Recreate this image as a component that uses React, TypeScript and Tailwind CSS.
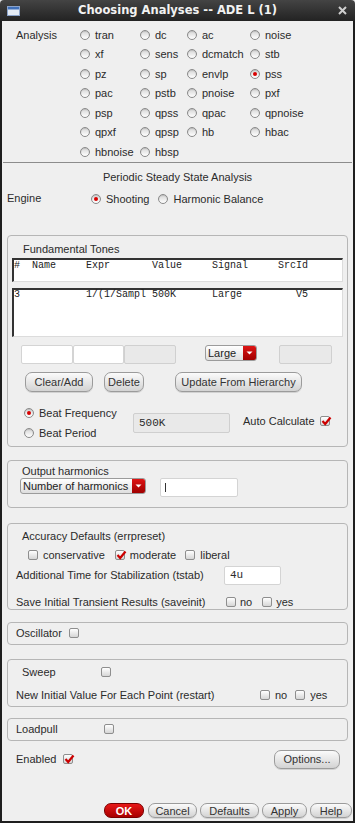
import React from "react";

const Radio = ({ on = false }: { on?: boolean }) => (
  <span className="inline-flex w-[10px] h-[10px] shrink-0 items-center justify-center rounded-full border border-[#8a8a8a] bg-linear-to-b from-[#d6d6d6] to-[#ffffff] shadow-[inset_0_1px_1px_rgba(0,0,0,0.12)]">
    {on && <span className="w-[4px] h-[4px] rounded-full bg-[#d80000]" />}
  </span>
);

const Check = ({ on = false }: { on?: boolean }) => (
  <span className="relative inline-flex w-[10px] h-[10px] shrink-0 items-center justify-center rounded-[2px] border border-[#8e8e8e] bg-linear-to-b from-[#ffffff] to-[#d6d6d6]">
    {on && (
      <svg width="11" height="10" viewBox="0 0 11 10" className="absolute left-[0px] top-[-1px]">
        <path d="M1.5 5 L4.2 8 L9.5 1.5" stroke="#cc0000" strokeWidth="2.2" fill="none" />
      </svg>
    )}
  </span>
);

const Btn = ({ children, className = "" }: { children: React.ReactNode; className?: string }) => (
  <div
    className={
      "flex shrink-0 items-center justify-center rounded-[7px] border border-[#9b9b9b] bg-linear-to-b from-[#fbfbfb] to-[#d3d3d3] text-[#333] shadow-[0_1px_0_rgba(0,0,0,0.12)] " +
      className
    }
  >
    {children}
  </div>
);

const Drop = ({ label, className = "" }: { label: string; className?: string }) => (
  <div
    className={
      "flex shrink-0 h-[16px] overflow-hidden rounded-[3px] border border-[#9b9b9b] bg-linear-to-b from-[#ffffff] to-[#dedede] " +
      className
    }
  >
    <span className="flex-1 pl-[2px] leading-[14px] text-[#222]">{label}</span>
    <span className="flex w-[13px] items-center justify-center bg-linear-to-b from-[#de1414] to-[#a00000]">
      <svg width="7" height="4" viewBox="0 0 7 4">
        <path d="M0.5 0.5 L6.5 0.5 L3.5 3.5 Z" fill="#ffffff" />
      </svg>
    </span>
  </div>
);

const Group = ({ children, className = "" }: { children: React.ReactNode; className?: string }) => (
  <div className={"mx-[5px] shrink-0 rounded-[4px] border border-[#b6b6b6] " + className}>{children}</div>
);

const analyses: [string, boolean][][] = [
  [["tran", false], ["dc", false], ["ac", false], ["noise", false]],
  [["xf", false], ["sens", false], ["dcmatch", false], ["stb", false]],
  [["pz", false], ["sp", false], ["envlp", false], ["pss", true]],
  [["pac", false], ["pstb", false], ["pnoise", false], ["pxf", false]],
  [["psp", false], ["qpss", false], ["qpac", false], ["qpnoise", false]],
  [["qpxf", false], ["qpsp", false], ["hb", false], ["hbac", false]],
  [["hbnoise", false], ["hbsp", false]],
];

export default function App() {
  return (
    <div className="w-[355px] h-[823px] flex flex-col bg-[#e6e6e6] overflow-hidden">
      {/* Title bar */}
      <div className="h-[21px] shrink-0 flex items-center rounded-t-[4px] bg-linear-to-b from-[#444444] to-[#232323]">
        <div className="w-[40px] pl-[7px] flex items-center">
          <svg width="13" height="10" viewBox="0 0 13 10">
            <rect x="0.5" y="0.5" width="12" height="9" fill="#e4ebf5" stroke="#8aa2c8" />
            <rect x="1" y="1" width="11" height="2.5" fill="#3f6fb8" />
          </svg>
        </div>
        <div className="flex-1 text-center text-[11.5px] font-bold text-[#f2f2f2] font-['DejaVu_Sans',sans-serif] whitespace-nowrap">
          Choosing Analyses -- ADE L (1)
        </div>
        <div className="w-[40px] pr-[8px] flex justify-end">
          <svg width="9" height="9" viewBox="0 0 9 9">
            <path d="M1 1 L8 8 M8 1 L1 8" stroke="#cfcfcf" strokeWidth="2" />
          </svg>
        </div>
      </div>

      {/* Body */}
      <div className="flex-1 flex flex-col border-x-2 border-b-2 border-[#1e1e1e] bg-[#efefef] text-[11px] leading-[14px] text-[#2b2b2b] font-['Liberation_Sans',Arial,sans-serif]">
        {/* Analysis */}
        <div className="flex pt-[4px] pl-[14px]">
          <div className="w-[64px] h-[19.5px] flex items-center">Analysis</div>
          <div className="grid grid-cols-[60px_47px_63px_80px] auto-rows-[19.5px]">
            {analyses.flat().map(([name, on]) => (
              <div key={name} className="flex items-center">
                <Radio on={on} />
                <span className="ml-[5px]">{name}</span>
              </div>
            ))}
          </div>
        </div>
        <div className="h-0 border-t border-t-[#8c8c8c] mx-[1px]" />

        <div className="h-[28px] flex items-center justify-center">Periodic Steady State Analysis</div>
        <div className="h-[16px] flex items-center pl-[5px]">
          <span className="w-[84px] -mt-[2px]">Engine</span>
          <Radio on />
          <span className="ml-[5px]">Shooting</span>
          <span className="ml-[9px] flex">
            <Radio />
          </span>
          <span className="ml-[5px]">Harmonic Balance</span>
        </div>

        {/* Fundamental Tones */}
        <Group className="mt-[28px] h-[212px] flex flex-col">
          <div className="pl-[15px] mt-[6px]">Fundamental Tones</div>
          <div className="mx-[4px] mt-[2px] h-[24px] bg-white border-t-2 border-l-2 border-t-[#333] border-l-[#333] border-r border-b border-r-[#dcdcdc] border-b-[#dcdcdc] font-['Liberation_Mono',monospace] text-[10px] leading-[12px] whitespace-pre text-[#222]">
            {"#  Name     Expr       Value     Signal     SrcId"}
          </div>
          <div className="mx-[4px] mt-[6px] h-[49px] bg-white border-t-2 border-l-2 border-t-[#333] border-l-[#333] border-r border-b border-r-[#dcdcdc] border-b-[#dcdcdc] font-['Liberation_Mono',monospace] text-[10px] leading-[10px] whitespace-pre text-[#222]">
            {"3           1/(1/Sampl 500K      Large         V5"}
          </div>
          <div className="mt-[8px] flex items-start pl-[13px]">
            <div className="w-[52px] h-[19px] bg-white border border-[#d4d4d4] rounded-[2px]" />
            <div className="w-[51px] h-[19px] bg-white border border-[#d4d4d4] rounded-[2px]" />
            <div className="w-[52px] h-[19px] bg-[#e9e9e9] border border-[#d0d0d0] rounded-[2px]" />
            <Drop label="Large" className="ml-[29px] w-[52px]" />
            <div className="ml-[22px] w-[53px] h-[19px] bg-[#e9e9e9] border border-[#d0d0d0] rounded-[2px]" />
          </div>
          <div className="mt-[8px] flex pl-[17px]">
            <Btn className="w-[68px] h-[20px]">Clear/Add</Btn>
            <Btn className="ml-[11px] w-[40px] h-[20px]">Delete</Btn>
            <Btn className="ml-[31px] w-[127px] h-[20px]">Update From Hierarchy</Btn>
          </div>
          <div className="mt-[12px] flex items-start pl-[16px]">
            <div className="w-[109px]">
              <div className="h-[19.5px] flex items-center">
                <Radio on />
                <span className="ml-[5px]">Beat Frequency</span>
              </div>
              <div className="h-[19.5px] flex items-center">
                <Radio />
                <span className="ml-[5px]">Beat Period</span>
              </div>
            </div>
            <div className="mt-[9px] w-[97px] h-[20px] flex items-center pl-[5px] bg-[#e9e9e9] border border-[#cfcfcf] rounded-[2px] font-['Liberation_Mono',monospace] text-[11px]">
              500K
            </div>
            <div className="ml-[13px] mt-[10px] h-[14px] flex items-center">
              <span>Auto Calculate</span>
              <span className="ml-[5px] flex">
                <Check on />
              </span>
            </div>
          </div>
        </Group>

        {/* Output harmonics */}
        <Group className="mt-[13px] h-[48px]">
          <div className="pl-[14px] mt-[3px]">Output harmonics</div>
          <div className="flex items-start pl-[12px]">
            <Drop label="Number of harmonics" className="w-[126px]" />
            <div className="ml-[14px] w-[78px] h-[19px] flex items-center pl-[4px] bg-white border border-[#d4d4d4] rounded-[2px]">
              <span className="w-[1px] h-[9px] bg-[#333]" />
            </div>
          </div>
        </Group>

        {/* Accuracy */}
        <Group className="mt-[15px] h-[87px]">
          <div className="pl-[14px] mt-[5px]">Accuracy Defaults (errpreset)</div>
          <div className="mt-[5px] h-[14px] flex items-center pl-[20px]">
            <Check />
            <span className="ml-[5px]">conservative</span>
            <span className="ml-[10px] flex">
              <Check on />
            </span>
            <span className="ml-[5px]">moderate</span>
            <span className="ml-[9px] flex">
              <Check />
            </span>
            <span className="ml-[5px]">liberal</span>
          </div>
          <div className="mt-[4px] h-[19px] flex items-center pl-[8px]">
            <span className="w-[208px]">Additional Time for Stabilization (tstab)</span>
            <div className="w-[57px] h-[19px] flex items-center pl-[5px] bg-white border border-[#d4d4d4] rounded-[2px] font-['Liberation_Mono',monospace] text-[11px]">
              4u
            </div>
          </div>
          <div className="mt-[10px] h-[14px] flex items-center pl-[8px]">
            <span className="w-[210px]">Save Initial Transient Results (saveinit)</span>
            <Check />
            <span className="ml-[4px]">no</span>
            <span className="ml-[10px] flex">
              <Check />
            </span>
            <span className="ml-[4px]">yes</span>
          </div>
        </Group>

        {/* Oscillator */}
        <Group className="mt-[12px] h-[23px] flex items-center pl-[8px]">
          <span>Oscillator</span>
          <span className="ml-[7px] flex">
            <Check />
          </span>
        </Group>

        {/* Sweep */}
        <Group className="mt-[14px] h-[48px]">
          <div className="mt-[5px] h-[14px] flex items-center pl-[14px]">
            <span className="w-[79px]">Sweep</span>
            <Check />
          </div>
          <div className="mt-[9px] h-[14px] flex items-center pl-[8px]">
            <span className="w-[244px]">New Initial Value For Each Point (restart)</span>
            <Check />
            <span className="ml-[5px]">no</span>
            <span className="ml-[8px] flex">
              <Check />
            </span>
            <span className="ml-[5px]">yes</span>
          </div>
        </Group>

        {/* Loadpull */}
        <Group className="mt-[11px] h-[23px] flex items-center pl-[8px]">
          <span className="w-[88px]">Loadpull</span>
          <Check />
        </Group>

        {/* Enabled */}
        <div className="mt-[9px] h-[19px] flex items-center pl-[14px] pr-[13px]">
          <span className="w-[47px]">Enabled</span>
          <Check on />
          <Btn className="ml-auto w-[66px] h-[19px]">Options...</Btn>
        </div>

        {/* Bottom buttons */}
        <div className="mt-auto mb-[3px] flex justify-end pr-[1px]">
          <div className="w-[40px] h-[15px] flex items-center justify-center rounded-[7px] border border-[#7a0000] bg-linear-to-b from-[#e81818] to-[#a80000] text-white font-bold text-[11px]">
            OK
          </div>
          <Btn className="ml-[4px] w-[49px] h-[15px]">Cancel</Btn>
          <Btn className="ml-[3px] w-[59px] h-[15px]">Defaults</Btn>
          <Btn className="ml-[3px] w-[45px] h-[15px]">Apply</Btn>
          <Btn className="ml-[3px] w-[42px] h-[15px]">Help</Btn>
        </div>
      </div>
    </div>
  );
}
